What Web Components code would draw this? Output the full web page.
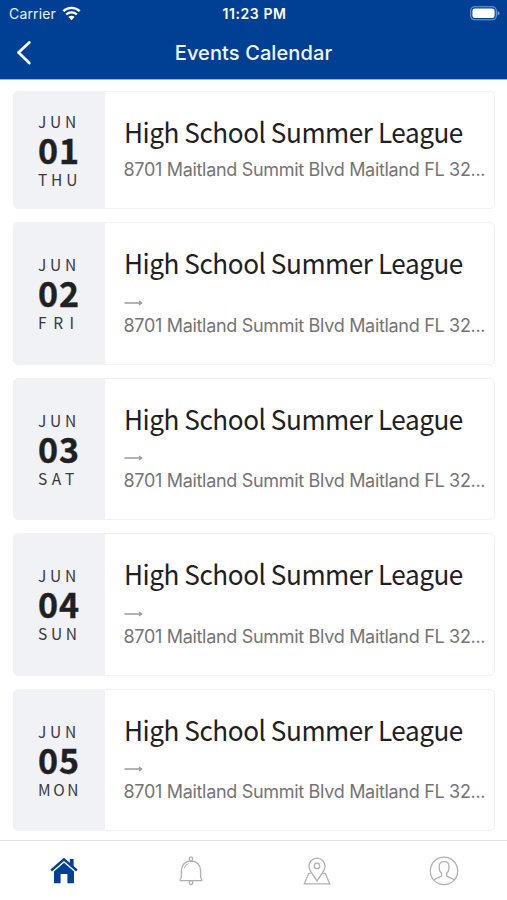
<!DOCTYPE html>
<html lang="en">
<head>
<meta charset="utf-8">
<meta name="viewport" content="width=device-width, initial-scale=1">
<title>Events Calendar</title>
<style>
	body {
		margin: 0;
		height: 900px;
		overflow: hidden;
		background: #fff;
		font-family: Inter, 'Liberation Sans', sans-serif;
	}
</style>
</head>
<body>
<events-screen></events-screen>

<script>
const html = String.raw;

class StatusBar extends HTMLElement {
	connectedCallback() {
		this.attachShadow({ mode: 'open' }).innerHTML = html`
			<style>
				:host {
					display: grid;
					grid-template-columns: 1fr auto 1fr;
					align-items: center;
					height: 27px;
					padding: 0 7px 0 9px;
					color: #e9f2ff;
					font-size: 14px;
				}
				.left {
					display: flex;
					align-items: center;
					gap: 6px;
				}
				.carrier { letter-spacing: 0.15px; }
				.time {
					color: #fff;
					font-weight: 600;
					font-size: 14px;
					letter-spacing: 0.6px;
				}
				svg { display: block; }
				.battery { justify-self: end; }
			</style>
			<span class="left">
				<span class="carrier">Carrier</span>
				<svg width="19" height="15" viewBox="0 0 19 15" fill="none" stroke="#fff" stroke-width="2.4">
					<path d="M1.3 5.2a11.7 11.7 0 0 1 16.4 0"/>
					<path d="M4.2 8.5a7.6 7.6 0 0 1 10.6 0"/>
					<path d="M9.5 14.2 6.4 11a4.4 4.4 0 0 1 6.2 0z" fill="#fff" stroke="none"/>
				</svg>
			</span>
			<span class="time">11:23 PM</span>
			<svg class="battery" width="30" height="15" viewBox="0 0 30 15">
				<rect x=".7" y=".7" width="25.6" height="13" rx="4" fill="none" stroke="#7f9fcd" stroke-width="1.1"/>
				<rect x="2.4" y="2.4" width="22.2" height="9.6" rx="2.3" fill="#fff"/>
				<path d="M27.6 5v4.6q1.9-.7 1.9-2.3T27.6 5z" fill="#7f9fcd"/>
			</svg>
		`;
	}
}

class NavHeader extends HTMLElement {
	connectedCallback() {
		this.attachShadow({ mode: 'open' }).innerHTML = html`
			<style>
				:host {
					display: grid;
					grid-template-columns: 1fr auto 1fr;
					align-items: center;
					height: 52px;
					padding: 0 16px;
					box-sizing: border-box;
					color: #f1f6ff;
				}
				svg { display: block; }
				h1 {
					margin: 0;
					font-size: 20px;
					font-weight: 550;
					letter-spacing: 0.1px;
					line-height: 51px;
				}
			</style>
			<svg width="17" height="26" viewBox="0 0 17 26" fill="none" stroke="#fff" stroke-width="2.8" stroke-linecap="round" stroke-linejoin="round">
				<path d="M13.3 2.5 2.5 12.5l10.8 10.5"/>
			</svg>
			<h1><slot></slot></h1>
		`;
	}
}

class EventCard extends HTMLElement {
	connectedCallback() {
		const arrow = this.hasAttribute('range') ? html`
			<svg class="arrow" width="19" height="8" viewBox="0 0 19 8" fill="none" stroke="#9a9a9a" stroke-width="1.3">
				<path d="M.5 4h17M15 2l2.7 2L15 6"/>
			</svg>` : '';
		this.attachShadow({ mode: 'open' }).innerHTML = html`
			<style>
				:host {
					display: flex;
					height: 118px;
					box-sizing: border-box;
					border: 1px solid #eff1f3;
					border-radius: 5px;
					overflow: hidden;
					background: #fff;
					font-family: 'Noto Sans CJK SC', sans-serif;
					color: #1e2022;
				}
				:host([range]) { height: 142.4px; }
				::slotted(*) { display: block; }
				.date {
					flex: none;
					width: 91px;
					padding-left: 24px;
					box-sizing: border-box;
					background: #f1f2f6;
					display: flex;
					flex-direction: column;
					justify-content: center;
					white-space: nowrap;
				}
				.month, .weekday {
					font-size: 15.5px;
					line-height: 22px;
					color: #37393c;
				}
				.month { letter-spacing: 3.8px; }
				.weekday { letter-spacing: var(--spread, 4px); }
				.day {
					font-size: 34px;
					font-weight: 700;
					line-height: 36px;
					letter-spacing: 0.9px;
					-webkit-text-stroke: 0.4px currentColor;
				}
				.info {
					flex: 1;
					min-width: 0;
					padding: 18px 8px 0 18.5px;
				}
				.title {
					font-size: 27.5px;
					line-height: 42px;
					letter-spacing: -0.48px;
					white-space: nowrap;
					transform: scaleX(0.95);
					transform-origin: left;
				}
				.arrow {
					display: block;
					margin: 15.5px 0 6px;
				}
				.place {
					margin-top: 5px;
					font-family: Inter, sans-serif;
					font-size: 18px;
					line-height: 26px;
					letter-spacing: -0.31px;
					color: #747474;
					white-space: nowrap;
				}
			</style>
			<div class="date">
				<span class="month"><slot name="month"></slot></span>
				<span class="day"><slot name="day"></slot></span>
				<span class="weekday"><slot name="weekday"></slot></span>
			</div>
			<div class="info">
				<div class="title"><slot name="title"></slot></div>
				${arrow}
				<div class="place"><slot name="place"></slot></div>
			</div>
		`;
	}
}

class TabBar extends HTMLElement {
	connectedCallback() {
		this.attachShadow({ mode: 'open' }).innerHTML = html`
			<style>
				:host {
					display: grid;
					grid-template-columns: repeat(4, 1fr);
					height: 60px;
					padding-left: 1px;
					box-sizing: border-box;
					border-top: 1px solid #e0e0e0;
					background: #fff;
				}
				span {
					display: grid;
					place-items: center;
				}
				svg {
					display: block;
					width: 30px;
					height: 30px;
					fill: none;
					stroke: #b0b0b0;
					stroke-width: 1.3;
				}
				.home {
					fill: #004094;
					stroke: none;
				}
			</style>
			<span>
				<svg class="home" viewBox="0 0 30 30">
					<path d="M20.8 3h3.8v8.4l-3.8-3.6z"/>
					<path d="M15 1.8 28.6 13.6l-1.5 1.9L15 5.1 2.9 15.5 1.4 13.6z"/>
					<path d="M15 6.8l10 8.8v11.6h-6.6V18h-6.8v9.2H5V15.6z"/>
				</svg>
			</span>
			<span>
				<svg viewBox="0 0 30 30">
					<ellipse cx="15" cy="2.9" rx="1.6" ry="2.1"/>
					<path d="M15 5c-5.8 0-9.6 4-9.6 9.4v6.1c0 1.6-1.2 2.5-1.2 4.1h21.6c0-1.6-1.2-2.5-1.2-4.1v-6.1c0-5.4-3.8-9.4-9.6-9.4z"/>
					<path d="M8.4 12.3c.5-2.4 2-4 4.3-4.7" stroke-width="1"/>
					<ellipse cx="15" cy="26.6" rx="1.7" ry="2"/>
				</svg>
			</span>
			<span>
				<svg viewBox="0 0 30 30">
					<path d="M15 25c-1.8-4-8-9-8-14.9a8 8 0 0 1 16 0c0 5.9-6.2 10.9-8 14.9z"/>
					<circle cx="15" cy="9.9" r="2.7"/>
					<path d="M8.8 17.3H6.7L2.3 27.8h25.4l-4.4-10.5h-2.1"/>
				</svg>
			</span>
			<span>
				<svg viewBox="0 0 30 30">
					<circle cx="15" cy="14.9" r="13.7"/>
					<path d="M4.8 24.3c1.2-2.2 7.2-3 7.8-4.5v-2.6c-1.5-1-2.4-3.5-2.4-6.5 0-3.4 1.9-5 4.9-5s4.9 1.6 4.9 5c0 3-.9 5.5-2.4 6.5v2.6c.6 1.5 6.6 2.3 7.7 4.5"/>
				</svg>
			</span>
		`;
	}
}

const PLACE = '8701 Maitland Summit Blvd Maitland FL 32...';
const EVENTS = [
	{ day: '01', weekday: 'THU', spread: 3.8 },
	{ day: '02', weekday: 'FRI', spread: 6.6, range: true },
	{ day: '03', weekday: 'SAT', spread: 4.6, range: true },
	{ day: '04', weekday: 'SUN', spread: 3.7, range: true },
	{ day: '05', weekday: 'MON', spread: 2.6, range: true },
];

class EventsScreen extends HTMLElement {
	connectedCallback() {
		const cards = EVENTS.map((ev) => html`
			<event-card ${ev.range ? 'range' : ''} style="--spread: ${ev.spread}px">
				<span slot="month">JUN</span>
				<span slot="day">${ev.day}</span>
				<span slot="weekday">${ev.weekday}</span>
				<span slot="title">High School Summer League</span>
				<span slot="place">${PLACE}</span>
			</event-card>
		`).join('');
		this.attachShadow({ mode: 'open' }).innerHTML = html`
			<style>
				:host {
					display: flex;
					flex-direction: column;
					height: 900px;
				}
				header {
					background: #004094;
					height: 79px;
					border-bottom: 1px solid #94b4da;
				}
				main {
					flex: 1;
					min-height: 0;
					display: flex;
					flex-direction: column;
					gap: 13.1px;
					padding: 11.2px 12.5px 0 13px;
				}
				main > * { flex: none; }
			</style>
			<header>
				<status-bar></status-bar>
				<nav-header>Events Calendar</nav-header>
			</header>
			<main>${cards}</main>
			<tab-bar></tab-bar>
		`;
	}
}

customElements.define('status-bar', StatusBar);
customElements.define('nav-header', NavHeader);
customElements.define('event-card', EventCard);
customElements.define('tab-bar', TabBar);
customElements.define('events-screen', EventsScreen);
</script>
</body>
</html>
